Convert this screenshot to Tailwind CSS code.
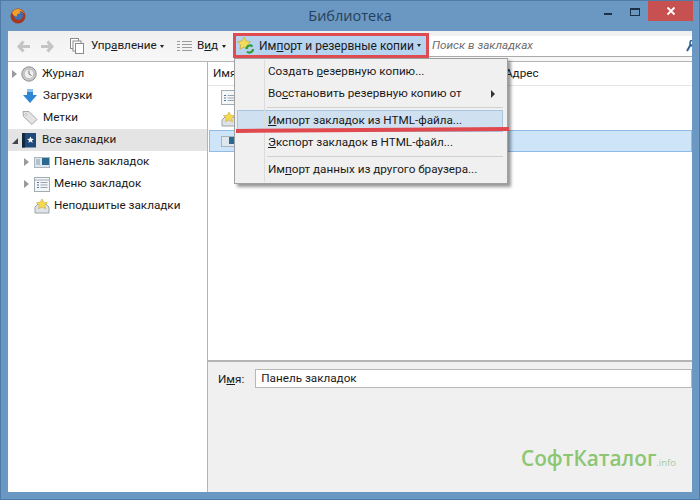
<!DOCTYPE html>
<html lang="ru">
<head>
<meta charset="UTF-8">
<title>Библиотека</title>
<script src="https://cdn.jsdelivr.net/npm/@tailwindcss/browser@4"></script>
</head>
<body class="m-0 overflow-hidden">
<div class="relative w-[700px] h-[500px] bg-[#6b98c2] flex flex-col font-['Roboto','Noto_Sans',sans-serif] text-[11.700px] text-[#1a1a1a] border border-[#4f7ba6]">
  <!-- title bar -->
  <div class="h-[30px] shrink-0 flex items-center relative">
    <svg class="ml-[9px] mt-[-1px]" width="16" height="16" viewBox="0 0 16 16">
      <circle cx="8" cy="8" r="7.500" fill="#a5391f"/>
      <circle cx="8.500" cy="7.500" r="4.500" fill="#3f6fb5"/>
      <path d="M2 5C3 2 6 .5 9 1c3 .5 5 3 5.500 5-1-2-3-3.500-5-3 1 1 1 2 0 2.500-2 0-3 1-2.500 3C5 9 3 7 2 5z" fill="#f0a02c"/>
    </svg>
    <div class="absolute left-0 right-0 top-[5px] text-center text-[14.500px] leading-[20px] text-[#26405c] font-['Open_Sans',sans-serif]">Библиотека</div>
    <div class="ml-auto flex items-start self-start mr-[6px]">
      <div class="w-[26px] h-[20px] flex items-center justify-center"><div class="w-[8px] h-[2px] bg-[#1c3048] mt-[6px]"></div></div>
      <div class="w-[27px] h-[20px] flex items-center justify-center"><div class="w-[10px] h-[8px] border border-[#1c3048] border-t-2 mt-[2px]"></div></div>
      <div class="w-[45px] h-[20px] bg-[#c75050] flex items-center justify-center">
        <svg width="10" height="10" viewBox="0 0 10 10"><path d="M1.500 1.500l7 7M8.500 1.500l-7 7" stroke="#fff" stroke-width="1.800"/></svg>
      </div>
    </div>
  </div>

  <!-- client area -->
  <div class="mx-[7px] h-[461px] bg-white flex flex-col">
    <!-- toolbar -->
    <div class="h-[31px] shrink-0 flex items-center bg-gradient-to-b from-[#f0f0f0] to-[#f8f8f8] border-b border-[#b4b4b4]">
      <svg class="ml-[9px]" width="13" height="13" viewBox="0 0 13 13"><path d="M6.500 1.500L2 6.500l4.500 5M2.500 6.500H13" fill="none" stroke="#c4c4c4" stroke-width="3"/></svg>
      <svg class="ml-[11px]" width="13" height="13" viewBox="0 0 13 13"><path d="M6.500 1.500l4.500 5-4.500 5M10.500 6.500H0" fill="none" stroke="#c4c4c4" stroke-width="3"/></svg>
      <svg class="ml-[16px]" width="15" height="17" viewBox="0 0 15 17"><rect x=".5" y=".5" width="8" height="10" fill="#fff" stroke="#8a8a8a"/><rect x="3" y="3" width="8" height="10" fill="#fff" stroke="#8a8a8a"/><rect x="5.500" y="5.500" width="8" height="10" fill="#fff" stroke="#8a8a8a"/></svg>
      <span class="ml-[6px] w-[66px] whitespace-nowrap">Упр<span class="underline">а</span>вление</span>
      <span class="ml-[3px] w-0 h-0 border-x-[2.500px] border-x-transparent border-t-[3px] border-t-[#222]"></span>
      <svg class="ml-[13px]" width="15" height="13" viewBox="0 0 15 13"><path d="M0 1.500h3M5 1.500h10M0 4.500h3M5 4.500h10M0 7.500h3M5 7.500h10M0 10.500h3M5 10.500h10" stroke="#9a9a9a"/></svg>
      <span class="ml-[5px] w-[22px] whitespace-nowrap">В<span class="underline">и</span>д</span>
      <span class="ml-[3px] w-0 h-0 border-x-[2.500px] border-x-transparent border-t-[3px] border-t-[#222]"></span>
      <!-- import button -->
      <div class="ml-[7px] w-[196px] h-[25px] shrink-0 flex items-center bg-[#b6d3ef] border-[3px] border-[#de4b50] self-start mt-[2px]">
        <svg class="ml-[1px]" width="18" height="17" viewBox="0 0 18 17">
          <path d="M7 0l2 4 4.500.7-3.200 3.100.7 4.400L7 10.100 3 12.200l.7-4.400L.5 4.700 5 4z" fill="#f2dc5a" stroke="#c9a93a" stroke-width=".7"/>
          <path d="M9.500 12a3.500 3.500 0 0 1 6-2.500M16 12a3.500 3.500 0 0 1-6 2.500" fill="none" stroke="#2f9e3a" stroke-width="2.200"/>
        </svg>
        <span class="ml-[4px] text-[12px] whitespace-nowrap">Им<span class="underline">п</span>орт и резервные копии</span>
        <span class="ml-[3px] w-0 h-0 border-x-[2.500px] border-x-transparent border-t-[3px] border-t-[#222]"></span>
      </div>
      <!-- search -->
      <div class="flex-1 h-[21px] self-start mt-[5px] bg-white border-b border-[#aaaaaa] flex items-center relative overflow-hidden">
        <span class="ml-[3px] italic text-[#6d6d6d] whitespace-nowrap">Поиск в закладках</span>
        <svg class="absolute right-0 top-[4px]" width="6" height="12" viewBox="0 0 6 12"><path d="M5 4L1 11" stroke="#2d6297" stroke-width="2"/><circle cx="7" cy="3" r="3" fill="none" stroke="#2d6297" stroke-width="1.500"/></svg>
      </div>
    </div>

    <!-- panes -->
    <div class="flex-1 flex min-h-0">
      <!-- sidebar -->
      <div class="w-[200px] shrink-0 border-r border-[#b4b4b4] pt-px flex flex-col">
        <div class="h-[22px] flex items-center">
          <span class="ml-[4px] w-0 h-0 border-y-[4px] border-y-transparent border-l-[5px] border-l-[#9a9a9a]"></span>
          <svg class="ml-[4px]" width="16" height="16" viewBox="0 0 16 16"><circle cx="8" cy="8" r="7.200" fill="#c9c9c9" stroke="#8f8f8f"/><circle cx="8" cy="8" r="4.800" fill="#efefef" stroke="#a8a8a8" stroke-width=".6"/><path d="M8 4.500V8l2.500 1.500" fill="none" stroke="#777"/></svg>
          <span class="ml-[5px]">Журнал</span>
        </div>
        <div class="h-[22px] flex items-center">
          <svg class="ml-[14px]" width="16" height="16" viewBox="0 0 16 16"><path d="M5 1h6v6h4l-7 8-7-8h4z" fill="#2f86d3"/><path d="M5 1h6v3H5z" fill="#8cc2ee"/></svg>
          <span class="ml-[5px]">Загрузки</span>
        </div>
        <div class="h-[22px] flex items-center">
          <svg class="ml-[14px]" width="16" height="16" viewBox="0 0 16 16"><path d="M1 1.500h6l8 8-5 5-8.500-8z" fill="#e3e3e3" stroke="#a9a9a9"/><circle cx="4" cy="4.500" r="1" fill="#fff" stroke="#a9a9a9" stroke-width=".6"/></svg>
          <span class="ml-[5px]">Метки</span>
        </div>
        <div class="h-[22px] flex items-center bg-[#e4e4e4]">
          <span class="ml-[4px] mt-[2px] w-0 h-0 border-b-[6px] border-b-[#444] border-l-[6px] border-l-transparent"></span>
          <svg class="ml-[3px]" width="16" height="16" viewBox="0 0 16 16"><rect x="1" y="1" width="14" height="14.500" fill="#1f4a78"/><rect x="1" y="1" width="3" height="14.500" fill="#12283f"/><path d="M9.500 4.500l1 2.300 2.400.2-1.900 1.500.6 2.400-2.100-1.300-2.100 1.300.6-2.400L6.100 7l2.400-.2z" fill="#fff"/></svg>
          <span class="ml-[5px]">Все закладки</span>
        </div>
        <div class="h-[22px] flex items-center">
          <span class="ml-[16px] w-0 h-0 border-y-[4px] border-y-transparent border-l-[5px] border-l-[#9a9a9a]"></span>
          <svg class="ml-[5px]" width="16" height="14" viewBox="0 0 16 14"><rect x=".5" y="2.500" width="15" height="10" fill="#dfe7ee" stroke="#a9b4bd"/><rect x="8" y="3" width="7" height="7" fill="#2a6a92"/><path d="M2 5h4M2 7h4M2 9h4" stroke="#8a9aa8"/></svg>
          <span class="ml-[4px]">Панель закладок</span>
        </div>
        <div class="h-[22px] flex items-center">
          <span class="ml-[16px] w-0 h-0 border-y-[4px] border-y-transparent border-l-[5px] border-l-[#9a9a9a]"></span>
          <svg class="ml-[5px]" width="16" height="15" viewBox="0 0 16 15"><rect x=".5" y=".5" width="15" height="14" fill="#f4f6f8" stroke="#a3adb6"/><path d="M1 3h14" stroke="#a3adb6"/><path d="M3 5.500h2M3 8h2M3 10.500h2" stroke="#4a77a3"/><path d="M6.500 5.500h7M6.500 8h7M6.500 10.500h7" stroke="#9aa5af"/></svg>
          <span class="ml-[4px]">Меню закладок</span>
        </div>
        <div class="h-[22px] flex items-center">
          <svg class="ml-[26px]" width="16" height="16" viewBox="0 0 16 16"><path d="M1 9l3-3h8l3 3v6H1z" fill="#dfe3e8" stroke="#9aa3ab"/><path d="M8 1l1.800 3.300 3.700.5-2.700 2.500.7 3.500L8 9l-3.500 1.800.7-3.500L2.500 4.800l3.700-.5z" fill="#f5d94e" stroke="#c9a93a" stroke-width=".6"/></svg>
          <span class="ml-[4px]">Неподшитые закладки</span>
        </div>
      </div>

      <!-- right side -->
      <div class="flex-1 flex flex-col min-w-0">
        <div class="flex-1 min-h-0 bg-white">
          <div class="h-[24px] flex items-center border-b border-[#e5e5e5]">
            <span class="ml-[5px] w-[290px]">Имя</span>
            <span class="ml-[2px]">Адрес</span>
          </div>
          <div class="h-[22px] flex items-center">
            <svg class="ml-[13px]" width="16" height="15" viewBox="0 0 16 15"><rect x=".5" y=".5" width="15" height="14" fill="#f4f6f8" stroke="#a3adb6"/><path d="M3 5.500h2M3 8h2M3 10.500h2" stroke="#4a77a3"/><path d="M6.500 5.500h7M6.500 8h7M6.500 10.500h7" stroke="#9aa5af"/></svg>
          </div>
          <div class="h-[22px] flex items-center">
            <svg class="ml-[13px]" width="16" height="16" viewBox="0 0 16 16"><path d="M1 9l3-3h8l3 3v6H1z" fill="#dfe3e8" stroke="#9aa3ab"/><path d="M8 1l1.800 3.300 3.700.5-2.700 2.500.7 3.500L8 9l-3.500 1.800.7-3.500L2.500 4.800l3.700-.5z" fill="#f5d94e" stroke="#c9a93a" stroke-width=".6"/></svg>
          </div>
          <div class="h-[22px] flex items-center bg-[#cde4f9] border border-[#8fbce6] ml-[1px]">
            <svg class="ml-[11px]" width="16" height="14" viewBox="0 0 16 14"><rect x=".5" y="2.500" width="15" height="10" fill="#dfe7ee" stroke="#a9b4bd"/><rect x="8" y="3" width="7" height="7" fill="#2a6a92"/></svg>
          </div>
        </div>
        <!-- details -->
        <div class="h-[132px] shrink-0 bg-[#f0f0f0] border-t-2 border-[#b4b4b4] pt-[7px] flex items-start">
          <span class="ml-[10px] leading-[20px]">И<span class="underline">м</span>я:</span>
          <div class="ml-[11px] flex-1 h-[19px] bg-white border border-[#b8b8b8] flex items-center pl-[5px]">Панель закладок</div>
        </div>
      </div>
    </div>
  </div>

  <!-- dropdown menu -->
  <div class="absolute left-[233px] top-[57px] w-[274px] h-[126px] bg-[#f0f0f0] border border-[#a0a0a0] shadow-[3px_3px_3px_rgba(0,0,0,0.4)] pt-[2px] pl-[2px] pr-[4px]">
    <div class="absolute left-[29px] top-[1px] bottom-[1px] w-px bg-[#dcdcdc]"></div>
    <div class="h-[22px] flex items-center pl-[31px]"><span>Создать <span class="underline">р</span>езервную копию...</span></div>
    <div class="h-[22px] flex items-center pl-[31px]"><span>Во<span class="underline">с</span>становить резервную копию от</span><span class="ml-auto mr-[8px] w-0 h-0 border-y-[4px] border-y-transparent border-l-[4px] border-l-[#333]"></span></div>
    <div class="h-[5px] ml-[30px] flex items-center"><div class="w-full h-px bg-[#d0d0d0]"></div></div>
    <div class="h-[22px] flex items-center pl-[30px] bg-[#cfe0f1] border border-[#a9c5e0]"><span><span class="underline">И</span>мпорт закладок из HTML-файла...</span></div>
    <div class="h-[22px] flex items-center pl-[31px]"><span><span class="underline">Э</span>кспорт закладок в HTML-файл...</span></div>
    <div class="h-[5px] ml-[30px] flex items-center"><div class="w-full h-px bg-[#d0d0d0]"></div></div>
    <div class="h-[22px] flex items-center pl-[31px]"><span>Им<span class="underline">п</span>орт данных из другого браузера...</span></div>
  </div>

  <!-- red annotation line -->
  <div class="absolute left-[235px] top-[127px] w-[273px] h-[4px] bg-[#e04a4e] -rotate-[0.4deg]"></div>

  <!-- watermark -->
  <div class="absolute left-[520px] top-[443px] flex items-baseline font-['Open_Sans',sans-serif] text-[#8cc672] font-semibold text-[20.800px] leading-[28px]">СофтКаталог<span class="text-[9.500px] font-normal text-[#a6c99a]">.info</span></div>
</div>
</body>
</html>
